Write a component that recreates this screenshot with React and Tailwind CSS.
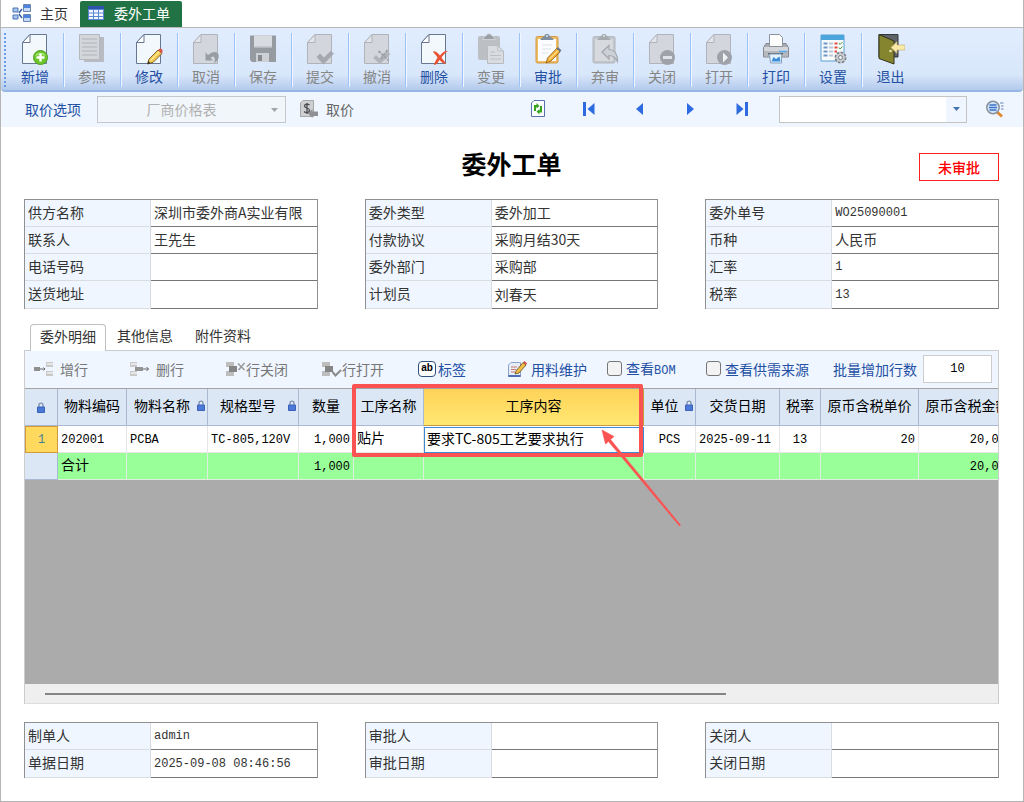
import clsx from "clsx";

const TONES = {
    on: { page: "#f3f8fd", line: "#667890", fold: "#ffffff" },
    off: { page: "#d3d7dd", line: "#b0b4ba", fold: "#e2e5ea" },
};

const Svg = ({ w = 28, h = 32, children }) => (
    <svg width={w} height={h} viewBox={`0 0 ${w} ${h}`} fill="none" aria-hidden="true" className="shrink-0">
        {children}
    </svg>
);

const Page = ({ tone = "off", children }) => (
    <Svg>
        <path d="M9 1.5H25.5V30.5H1.5V9.5Z" fill={TONES[tone].page} stroke={TONES[tone].line} />
        <path d="M9 1.5V9.5H1.5Z" fill={TONES[tone].fold} stroke={TONES[tone].line} />
        {children}
    </Svg>
);

const Clipboard = ({ tone = "off", children }) => {
    const on = tone === "on";
    return (
        <Svg>
            <rect x="2" y="3.5" width="22" height="26.5" rx="1.5" fill={on ? "#f0bd62" : "#c3c7cc"} stroke={on ? "#cf9a45" : "#b3b7bc"} />
            <rect x="4" y="6" width="18" height="22" fill={on ? "#fbfcfd" : "#d6d9de"} />
            <path d="M6.5 7C6.5 4.500 10 4.500 10.5 2.500C11 .5 15 .5 15.5 2.500C16 4.500 19.500 4.500 19.5 7Z" fill={on ? "#7f8f9f" : "#a6aaaf"} />
            <circle cx="13" cy="3" r="1" fill="#dfe5ec" />
            {children}
        </Svg>
    );
};

const Pencil = () => (
    <>
        <path d="M14 26L23 17L27 20.5L18 29.5L12.5 31Z" fill="#f2c94c" stroke="#5a4320" strokeWidth=".8" />
        <path d="M15.5 27.5L24.5 18.5" stroke="#fdeb9b" strokeWidth="1.2" />
        <path d="M23 17L25 15.5C26.5 15 28 17 27.5 19L26.5 20.5Z" fill="#d8564a" />
        <path d="M12.5 31L13.3 28L15.5 30.2Z" fill="#2e2a26" />
    </>
);

const AddIcon = () => (
    <Page tone="on">
        <circle cx="19.5" cy="24.5" r="7" fill="#6cc62b" stroke="#4d9f20" />
        <path d="M14 23C15 18.5 24 18.5 25 23C21 21.5 18 21.5 14 23Z" fill="#a7e36c" />
        <path d="M19.5 20.5V28.5M15.5 24.5H23.5" stroke="#fff" strokeWidth="2.400" />
    </Page>
);

const ReferIcon = () => (
    <Svg>
        <path d="M6 4H26V29H6Z" fill="#b8bcc2" />
        <path d="M1.5 1.5H21.5V26.5H1.5Z" fill="#d3d6db" stroke="#b5b9be" />
        <path d="M4 6H19M4 10H19M4 14H19M4 18H19M4 22H19" stroke="#b0b4b9" />
    </Svg>
);

const EditIcon = () => <Page tone="on"><Pencil /></Page>;

const CancelIcon = () => (
    <Page>
        <path d="M13.5 19.5V27.5H21L18.5 25C21 21.5 24.5 24 22 30C29.5 26 27.5 16.5 20 19.5L16 22Z" fill="#989ca3" />
    </Page>
);

const SaveIcon = () => (
    <Svg>
        <path d="M1 2.5H27V29H3L1 27Z" fill="#969aa1" />
        <path d="M5 2.5H23V15H5Z" fill="#d8dbe0" />
        <path d="M5 13.5H23V15H5Z" fill="#b5b9bf" />
        <path d="M7 20H20V29H7Z" fill="#cdd0d5" />
        <path d="M9 22H13V28H9Z" fill="#868b92" />
    </Svg>
);

const SubmitIcon = () => (
    <Page>
        <path d="M10.5 24L14 20.5L18 24.5L24.5 18L28 20.5L17.5 31.5Z" fill="#a5a9af" />
    </Page>
);

const RevokeIcon = () => (
    <Page>
        <path d="M10 25L13 22L16.5 25.5L24 19L27.5 21L17 31Z" fill="#b1b5ba" />
        <path d="M15.5 18L25.5 27.5M24.5 17L17 27" stroke="#a0a4aa" strokeWidth="2" strokeDasharray="3 1" />
    </Page>
);

const DeleteIcon = () => (
    <Page tone="on">
        <path d="M13 18.5C16 17.5 18 20.5 20 22.5C22 19.5 25 17.5 28 18C25.5 19.5 23 22 21.5 24.5C23 27 25 28.5 26 30.5C23 31.5 21 28.5 19.5 27C18 29 17 32 14 32C14.5 29 16.5 26.5 17.5 24.5C16 22 14 20.5 13 18.5Z" fill="#ea5236" />
    </Page>
);

const ChangeIcon = () => (
    <Svg>
        <rect x="1" y="3" width="22" height="24" rx="2" fill="#bcc0c5" />
        <path d="M6 6.5C7 3.500 9 3.500 9.5 2C10 .5 14 .5 14.5 2C15 3.500 17 3.500 18 6.5Z" fill="#9a9ea5" stroke="#cfd2d6" />
        <path d="M10.5 12.5H20.5L26.5 18V30.5H10.5Z" fill="#d9dce1" stroke="#b8bcc1" />
        <path d="M20.5 12.5V18H26.5M13 19H18M13 22.5H24M13 26H24" stroke="#bcc0c5" />
    </Svg>
);

const ApproveIcon = () => (
    <Clipboard tone="on">
        <path d="M8 12H18M8 16H17M8 20H14" stroke="#dfe3e8" />
        <path d="M13.5 25L22.5 15.5L26 19L17 28L12 30Z" fill="#f4ab33" stroke="#8a6425" strokeWidth=".8" />
        <path d="M15 26.5L24.5 17" stroke="#ffe08a" strokeWidth="1.2" />
        <path d="M22.5 15.5L24 14L27.5 17.5L26 19Z" fill="#6b7480" />
    </Clipboard>
);

const UnapproveIcon = () => (
    <Clipboard>
        <path d="M11 19L18 12.5V16.5C24 17 27 22 26.5 28.5C24 23.5 21.5 22.5 18 22.5V26Z" fill="#cdd1d6" stroke="#a3a7ad" strokeWidth="1.2" />
    </Clipboard>
);

const CloseDocIcon = () => (
    <Page>
        <circle cx="19.5" cy="24.5" r="7.5" fill="#9fa3a9" />
        <path d="M15 23H24V26H15Z" fill="#dfe2e6" />
    </Page>
);

const OpenDocIcon = () => (
    <Page>
        <circle cx="19.5" cy="24.5" r="7.5" fill="#9fa3a9" />
        <path d="M18 19.5L23 24.5L18 29.5Z" fill="#f0f2f4" />
    </Page>
);

const PrintIcon = () => (
    <Svg>
        <path d="M4 10.5H24L26.5 14.5V24H1.5V14.5Z" fill="#a9adb3" stroke="#85898f" />
        <path d="M7.5 1.5H17.5L20.5 4.500V13.5H7.5Z" fill="#fdfdfe" stroke="#8d939b" />
        <path d="M2 14H26V18H2Z" fill="#d3d6da" />
        <path d="M2 18H26V23.5H2Z" fill="#b5b9be" />
        <path d="M6 20H21V21.5H6Z" fill="#5b5f65" />
        <path d="M17 18.5H25" stroke="#58a7f0" strokeWidth="1.5" />
        <path d="M7.5 21H19.5V30H8.5Z" fill="#e3f2fc" stroke="#86a2bc" />
        <path d="M9.5 28.5L11.5 24L14 26L17.5 23.5L18.5 28.5Z" fill="#3b8edb" />
    </Svg>
);

const SettingIcon = () => (
    <Svg>
        <path d="M2 2H25V28H2Z" fill="#f8fbfd" stroke="#5a9fcd" />
        <path d="M2 2H25V7H2Z" fill="#4aa5db" />
        <path d="M4.5 10.5H8.5M4.5 14.5H8.5M4.5 18.5H8.5M4.5 22.5H8.5" stroke="#6c98c6" strokeWidth="2" />
        <path d="M10 10.5H14M10 14.5H14M10 18.5H14M10 22.5H14" stroke="#b9c8d6" strokeWidth="2" />
        <path d="M15.5 10.5H18.5M15.5 14.5H18.5M15.5 18.5H18" stroke="#e14b3b" strokeWidth="2.200" />
        <path d="M20 10L21 11.5L23.5 9M20 14.5L21 16L23.5 13.5" stroke="#4f9e3c" />
        <circle cx="21.5" cy="24.5" r="5.200" fill="#c9cdd2" stroke="#7a7f86" strokeWidth="1.6" strokeDasharray="2.600 1.400" />
        <circle cx="21.5" cy="24.5" r="2" fill="#eef1f4" stroke="#7a7f86" />
    </Svg>
);

const ExitIcon = () => (
    <Svg>
        <path d="M2 1.5H21V24H2Z" fill="#5e6269" stroke="#33363a" />
        <path d="M2 1.5L17 8V31L2 25.5Z" fill="#85842f" stroke="#33341a" />
        <circle cx="13.5" cy="18" r="1.300" fill="#e8e3a8" />
        <path d="M14 14.5L20 8.5V12H28V17H20V20.5Z" fill="#fbeaa6" stroke="#b9a874" strokeWidth=".6" />
    </Svg>
);

const TOOLS = [
    { label: "新增", icon: AddIcon, on: true },
    { label: "参照", icon: ReferIcon },
    { label: "修改", icon: EditIcon, on: true },
    { label: "取消", icon: CancelIcon },
    { label: "保存", icon: SaveIcon },
    { label: "提交", icon: SubmitIcon },
    { label: "撤消", icon: RevokeIcon },
    { label: "删除", icon: DeleteIcon, on: true },
    { label: "变更", icon: ChangeIcon },
    { label: "审批", icon: ApproveIcon, on: true },
    { label: "弃审", icon: UnapproveIcon },
    { label: "关闭", icon: CloseDocIcon },
    { label: "打开", icon: OpenDocIcon },
    { label: "打印", icon: PrintIcon, on: true },
    { label: "设置", icon: SettingIcon, on: true },
    { label: "退出", icon: ExitIcon, on: true },
];

const HomeIcon = () => (
    <Svg w={20} h={20}>
        <path d="M1 5H6V9H1ZM1 12H6V16H1Z" fill="#a9c4ee" stroke="#4d74b8" />
        <path d="M11.5 1.5H18.5V8.5H11.5ZM11.5 11.5H18.5V18.5H11.5Z" fill="#c7d9f4" stroke="#6c86b4" />
        <path d="M12 2H18V5H12ZM12 12H18V15H12Z" fill="#4b83dd" />
        <path d="M7 10L10 6M7 11L10 15" stroke="#35609f" strokeWidth="1.5" />
    </Svg>
);

const SheetIcon = () => (
    <Svg w={16} h={14}>
        <path d="M0 0H16V14H0Z" fill="#5b86d6" />
        <path d="M0 0H16V3H0Z" fill="#2d55ad" />
        <path d="M1 4H5V6.5H1ZM6 4H10V6.5H6ZM11 4H15V6.5H11ZM1 7.5H5V10H1ZM6 7.5H10V10H6ZM11 7.5H15V10H11ZM1 11H5V13H1ZM6 11H10V13H6ZM11 11H15V13H11Z" fill="#f3f7fe" />
    </Svg>
);

const PriceIcon = () => (
    <Svg w={19} h={18}>
        <path d="M3 .5H13.5V16.5H.5V3Z" fill="#cfd0d2" stroke="#a5a7a9" />
        <path d="M9.5 5C8 3.500 4.500 3.800 4.5 6C4.5 8.500 9.5 7.500 9.5 10.5C9.5 13 5.5 13 4 11.5M7 3V14" stroke="#4b4d50" strokeWidth="1.300" />
        <path d="M8 13.5L12.5 9V11.5H18V16H12.5V18Z" fill="#8f9194" />
    </Svg>
);

const RefreshIcon = () => (
    <Svg w={14} h={18}>
        <path d="M3 .5H13.5V16.5H.5V3Z" fill="#fff" stroke="#5a70ae" />
        <path d="M4 11V6H6M10 6V11.5H8" stroke="#37a31d" strokeWidth="2" />
        <path d="M5.500 3L8.5 6L5.500 8.500ZM8.500 9L5.500 11.5L8.500 14.500Z" fill="#37a31d" />
    </Svg>
);

const FirstIcon = () => (
    <Svg w={14} h={14}>
        <path d="M1 0H4V14H1Z" fill="#2f6be0" />
        <path d="M12.5 1V13L5.5 7Z" fill="#2f6be0" />
    </Svg>
);
const PrevIcon = () => <Svg w={9} h={14}><path d="M8 1V13L1 7Z" fill="#2f6be0" /></Svg>;
const NextIcon = () => <Svg w={9} h={14}><path d="M1 1V13L8 7Z" fill="#2f6be0" /></Svg>;
const LastIcon = () => (
    <Svg w={14} h={14}>
        <path d="M10 0H13V14H10Z" fill="#2f6be0" />
        <path d="M1.5 1V13L8.5 7Z" fill="#2f6be0" />
    </Svg>
);

const SearchIcon = () => (
    <Svg w={20} h={18}>
        <path d="M11.5 11.5L17 16.5" stroke="#e18a2d" strokeWidth="3" />
        <circle cx="8" cy="7.5" r="6.200" fill="#cfe4fb" stroke="#8a9099" strokeWidth="1.5" />
        <path d="M4.5 5H11.5M4 7.5H12M4.5 10H11.5" stroke="#3e73c6" strokeWidth="1.300" />
        <path d="M15 3H18.5M16 6H18.5M16 9H18.5" stroke="#6484b4" />
    </Svg>
);

const Caret = ({ className }) => (
    <svg width="7" height="4" viewBox="0 0 7 4" className={className} aria-hidden="true">
        <path d="M0 0H7L3.500 4Z" fill="currentColor" />
    </svg>
);

const RowIcon = ({ children }) => <Svg w={20} h={16}>{children}</Svg>;

const InsertRowIcon = () => (
    <RowIcon>
        <path d="M0 6H6V10H0Z" fill="#8f8f8f" />
        <path d="M6 8H11M9.5 6.500L11 8L9.5 9.500" stroke="#666" />
        <path d="M12 1H19V6H12ZM12 10H19V15H12Z" fill="#c9c9c9" />
        <path d="M13 2H19V4H13ZM13 11H19V13H13Z" fill="#e6e6e6" />
    </RowIcon>
);
const RemoveRowIcon = () => (
    <RowIcon>
        <path d="M0 1H7V6H0ZM0 10H7V15H0Z" fill="#c9c9c9" />
        <path d="M1 2H7V4H1ZM1 11H7V13H1Z" fill="#e6e6e6" />
        <path d="M5 6H13V10H5Z" fill="#939393" />
        <path d="M13 8H18.5M16.5 6L18.5 8L16.5 10" stroke="#666" />
    </RowIcon>
);
const CloseRowIcon = () => (
    <RowIcon>
        <path d="M0 1H8V6H0ZM0 10H8V15H0Z" fill="#bdbdbd" />
        <path d="M3 5H11V11H3Z" fill="#858585" />
        <path d="M12 2.5L18.5 9M18.5 2L12.5 9" stroke="#999" strokeWidth="1.5" />
    </RowIcon>
);
const OpenRowIcon = () => (
    <RowIcon>
        <path d="M0 1H8V6H0ZM0 10H8V15H0Z" fill="#bdbdbd" />
        <path d="M3 5H11V11H3Z" fill="#858585" />
        <path d="M10.5 11L13.5 14.5L19 9" stroke="#8a8a8a" strokeWidth="2" />
    </RowIcon>
);
const MaterialIcon = () => (
    <Svg w={20} h={18}>
        <path d="M3 2.5H12.5V16.5H.5V5Z" fill="#e4edf9" stroke="#8fa3c8" />
        <path d="M3 7H9M3 9.5H8M3 12H7" stroke="#d07a6a" />
        <path d="M.5 15H12.5V17H.5Z" fill="#4d6fb5" />
        <path d="M8 11L15 2.5L18 5L11 13L7 14Z" fill="#f0be45" stroke="#5f4a22" strokeWidth=".8" />
        <path d="M15 2.5L16.5 1L19 3.5L18 5Z" fill="#cf5047" />
    </Svg>
);

const LockIcon = () => (
    <svg width="8" height="11" viewBox="0 0 8 11" fill="none" className="shrink-0" aria-hidden="true">
        <path d="M2 5.5V3C2 .5 6 .5 6 3V5.5" stroke="#7d8fb0" strokeWidth="1.300" />
        <path d="M.5 5H7.5V10.5H.5Z" fill="#4a79d8" stroke="#3a63b8" />
    </svg>
);

const Num = ({ children }) => <span className="font-['Liberation_Mono',monospace] text-xs">{children}</span>;

const HEADER_FORMS = [
    [
        { id: "supplier", label: "供方名称", value: "深圳市委外商A实业有限" },
        { id: "contact", label: "联系人", value: "王先生" },
        { id: "phone", label: "电话号码", value: "" },
        { id: "address", label: "送货地址", value: "" },
    ],
    [
        { id: "type", label: "委外类型", value: "委外加工" },
        { id: "payment", label: "付款协议", value: "采购月结30天" },
        { id: "dept", label: "委外部门", value: "采购部" },
        { id: "planner", label: "计划员", value: "刘春天" },
    ],
    [
        { id: "orderNo", label: "委外单号", value: "WO25090001", num: true },
        { id: "currency", label: "币种", value: "人民币" },
        { id: "rate", label: "汇率", value: "1", num: true },
        { id: "tax", label: "税率", value: "13", num: true },
    ],
];

const FOOTER_FORMS = [
    [
        { id: "creator", label: "制单人", value: "admin", num: true },
        { id: "createdAt", label: "单据日期", value: "2025-09-08 08:46:56", num: true },
    ],
    [
        { id: "approver", label: "审批人", value: "" },
        { id: "approvedAt", label: "审批日期", value: "" },
    ],
    [
        { id: "closer", label: "关闭人", value: "" },
        { id: "closedAt", label: "关闭日期", value: "" },
    ],
];

const FieldGroup = ({ fields }) => (
    <div className="border-t border-r border-l border-[#909090]">
        {fields.map((f) => (
            <div key={f.id} className="flex h-[27px] last:h-7">
                <label htmlFor={f.id} className="w-[126px] shrink-0 border-r border-b border-[#d9dde2] bg-[#eff6ff] pl-[3px] leading-6">
                    {f.label}
                </label>
                <input
                    id={f.id}
                    defaultValue={f.value}
                    className={clsx(
                        "min-w-0 flex-1 border-b border-[#777777] bg-white pl-[3px] outline-none",
                        f.num ? "font-['Liberation_Mono',monospace] text-xs" : "pb-[2px]"
                    )}
                />
            </div>
        ))}
    </div>
);

const FormRow = ({ groups }) => (
    <div className="grid grid-cols-3 gap-[47px]">
        {groups.map((fields) => (
            <FieldGroup key={fields[0].id} fields={fields} />
        ))}
    </div>
);

const ActionButton = ({ icon: Icon, label, className }) => (
    <button type="button" className={clsx("flex shrink-0 items-center text-left", className)}>
        <Icon />
        {label}
    </button>
);

const COLUMNS = [
    { title: "物料编码", width: "w-[69px]", value: <Num>202001</Num>, total: "合计" },
    { title: "物料名称", width: "w-[81px]", lock: true, value: <Num>PCBA</Num> },
    { title: "规格型号", width: "w-[91px]", lock: true, value: <Num>TC-805,120V</Num> },
    { title: "数量", width: "w-[55px]", align: "text-right", value: <Num>1,000</Num>, total: <Num>1,000</Num> },
    { title: "工序名称", width: "w-[70px]", value: "贴片" },
    { title: "工序内容", width: "w-[220px]", value: "要求TC-805工艺要求执行", active: true },
    { title: "单位", width: "w-[52px]", lock: true, align: "text-center", value: <Num>PCS</Num> },
    { title: "交货日期", width: "w-[84px]", value: <Num>2025-09-11</Num> },
    { title: "税率", width: "w-[41px]", align: "text-center", value: <Num>13</Num> },
    { title: "原币含税单价", width: "w-[98px]", align: "text-right", value: <Num>20</Num> },
    { title: "原币含税金额", width: "w-[98px]", align: "text-right", value: <Num>20,000</Num>, total: <Num>20,000</Num> },
];

const DetailGrid = () => (
    <div className="relative flex flex-1 flex-col">
        <div className="flex-1 overflow-hidden border-t border-[#a3a3a3] bg-[#ababab]">
            <table className="w-[992px] table-fixed border-separate border-spacing-0 text-black">
                <thead>
                    <tr className="h-[37px]">
                        <th className="w-[33px] border-r border-b border-[#a9b9d3] bg-[#dbe7f5]">
                            <div className="flex justify-center"><LockIcon /></div>
                        </th>
                        {COLUMNS.map((c) => (
                            <th
                                key={c.title}
                                className={clsx(
                                    "border-r border-b px-0 pt-0 pb-1 font-normal whitespace-nowrap",
                                    c.width,
                                    c.active ? "border-[#c99a3c] bg-linear-to-b from-[#ffd257] to-[#ffe873]" : "border-[#a9b9d3] bg-[#dbe7f5]"
                                )}
                            >
                                <div className="flex items-center">
                                    <span className="flex-1">{c.title}</span>
                                    {c.lock && <span className="pr-[2px]"><LockIcon /></span>}
                                </div>
                            </th>
                        ))}
                    </tr>
                </thead>
                <tbody>
                    <tr className="h-[27px]">
                        <td className="border border-[#d29a3a] bg-[#ffd95e] px-0 pt-0 pb-1 text-center text-[#3f7f96]"><Num>1</Num></td>
                        {COLUMNS.map((c) =>
                            c.active ? (
                                <td key={c.title} className="bg-white p-0">
                                    <input
                                        aria-label={c.title}
                                        defaultValue={c.value}
                                        className="block h-[26px] w-full border border-[#3c8ad6] pb-1 pl-[2px] outline-none"
                                    />
                                </td>
                            ) : (
                                <td key={c.title} className={clsx("border-r border-b border-[#e6e6e6] bg-white px-[3px] pt-0 pb-1 whitespace-nowrap", c.align)}>
                                    {c.value}
                                </td>
                            )
                        )}
                    </tr>
                    <tr className="h-[27px]">
                        <td className="border-r border-b border-[#a9b9d3] bg-[#dbe7f5] p-0" />
                        {COLUMNS.map((c) => (
                            <td key={c.title} className={clsx("border-r border-b border-[#dfeedd] bg-[#99ff99] px-[3px] pt-0 pb-1 whitespace-nowrap", c.align)}>
                                {c.total}
                            </td>
                        ))}
                    </tr>
                </tbody>
            </table>
        </div>
        <div className="flex h-5 items-center border-b border-[#dddddd] bg-[#efefef] px-5">
            <div className="h-[2px] w-[73%] bg-[#858585]" />
        </div>

        {/* highlight frame round the process columns, with its pointer */}
        <div className="pointer-events-none absolute -top-1 left-[327px] h-[73px] w-[291px] rounded-xs border-4 border-[#fb5252]" />
        <svg width="84" height="100" viewBox="0 0 84 100" className="pointer-events-none absolute top-[41px] left-[575px]" aria-hidden="true">
            <path d="M2 1L14 7.5L10.500 10.5L80.500 96L79.500 97L8.500 12.500L5.500 15Z" fill="#fb5252" stroke="#fb5252" strokeWidth=".6" />
        </svg>
    </div>
);

const TABS = ["委外明细", "其他信息", "附件资料"];

const PAGERS = [
    { name: "刷新", icon: RefreshIcon },
    { name: "首张", icon: FirstIcon },
    { name: "上一张", icon: PrevIcon },
    { name: "下一张", icon: NextIcon },
    { name: "末张", icon: LastIcon },
];

const CHECK = "h-[15px] w-[15px] shrink-0 appearance-none rounded-[3px] border border-[#767676] bg-[#f3f3f3]";

export default function App() {
    return (
        <div className="flex min-h-screen flex-col border-x border-b border-[#b5b5b5] bg-white font-['Noto_Sans_CJK_SC',sans-serif] text-sm text-[#333333]">
            <nav className="flex h-7 items-end border-b border-[#b8b8b8]">
                <a href="#home" className="flex h-[26px] items-center gap-2 pr-3 pb-[2px] pl-[11px]">
                    <HomeIcon />
                    主页
                </a>
                <a href="#order" className="flex h-[26px] items-center gap-[10px] rounded-t-xs bg-[#217346] pr-3 pb-[2px] pl-2 text-white">
                    <SheetIcon />
                    委外工单
                </a>
            </nav>

            <div className="flex h-16 items-start rounded-b border-b-2 border-[#96b6e6] bg-linear-to-b from-[#e1edff] from-0% via-[#d9e7fb] via-75% to-[#b3caec] pt-[5px] pl-[3px]">
                <div className="mr-px h-[54px] border-l-2 border-dotted border-[#6c9be0]" />
                {TOOLS.map(({ label, icon: Icon, on }) => (
                    <button
                        key={label}
                        type="button"
                        disabled={!on}
                        className={clsx(
                            "flex h-[54px] w-[57px] flex-col items-center border-r border-[#9cc3f8] shadow-[1px_0_0_#eff6ff] last:border-r-0 last:shadow-none",
                            on ? "text-[#2450a4]" : "text-[#858585]"
                        )}
                    >
                        <Icon />
                        <span className="leading-[22px]">{label}</span>
                    </button>
                ))}
            </div>

            <div className="flex h-[35px] items-center bg-[#eff6ff] pr-[18px] pb-px pl-6">
                <label htmlFor="priceOption" className="text-[#2450a4]">取价选项</label>
                <div className="relative ml-4 w-[189px]">
                    <select id="priceOption" disabled className="h-[27px] w-full appearance-none border border-[#c4c8cd] bg-[#f1f6fb] pr-5 [text-align-last:center] text-[#b0b0b0] opacity-100">
                        <option>厂商价格表</option>
                    </select>
                    <Caret className="pointer-events-none absolute top-3 right-2 text-[#a5a5a5]" />
                </div>
                <button type="button" className="ml-[14px] flex items-center gap-[7px] text-[#666666]">
                    <PriceIcon />
                    取价
                </button>
                <div className="ml-auto flex">
                    {PAGERS.map(({ name, icon: Icon }) => (
                        <button key={name} type="button" aria-label={name} className="flex w-[51px] items-center justify-center">
                            <Icon />
                        </button>
                    ))}
                </div>
                <div className="relative ml-3 w-[188px]">
                    <select aria-label="查询" className="h-[27px] w-full appearance-none border border-[#c4c4c4] bg-white">
                        <option></option>
                    </select>
                    <span className="pointer-events-none absolute inset-y-px right-px flex w-5 items-center justify-center bg-[#eff6ff] text-[#4475b0]">
                        <Caret />
                    </span>
                </div>
                <button type="button" aria-label="搜索" className="ml-[18px]"><SearchIcon /></button>
            </div>

            <main className="flex flex-1 flex-col pr-[24px] pb-[23px] pl-[23px]">
                <header className="grid h-[72px] grid-cols-[1fr_auto_1fr] items-center">
                    <h1 className="col-start-2 text-[25px] leading-8 font-bold text-black">委外工单</h1>
                    <span className="mt-2 flex h-7 w-20 items-center justify-center justify-self-end border border-[#ff2020] pb-px font-medium text-[#ff0000]">
                        未审批
                    </span>
                </header>

                <FormRow groups={HEADER_FORMS} />

                <div className="mt-[15px] flex h-[26px] pl-[6px]">
                    {TABS.map((t, i) => (
                        <button
                            key={t}
                            type="button"
                            className={clsx(
                                "pb-1",
                                i === 0
                                    ? "relative z-10 -mb-px rounded-t-sm border border-b-0 border-[#c0c0c0] bg-white px-[9px]"
                                    : "px-[11px]"
                            )}
                        >
                            {t}
                        </button>
                    ))}
                </div>

                <section className="flex flex-1 flex-col border-t border-r border-l border-[#cccccc]">
                    <div className="flex h-[37px] items-center bg-[#eff6ff] pb-[2px] pl-[9px] text-[#2450a4]">
                        <ActionButton icon={InsertRowIcon} label="增行" className="w-24 gap-[6px] text-[#777777]" />
                        <ActionButton icon={RemoveRowIcon} label="删行" className="w-24 gap-[6px] text-[#777777]" />
                        <ActionButton icon={CloseRowIcon} label="行关闭" className="w-24 text-[#777777]" />
                        <ActionButton icon={OpenRowIcon} label="行打开" className="w-24 text-[#777777]" />
                        <button type="button" className="flex w-[90px] shrink-0 items-center gap-[2px]">
                            <span className="flex h-4 w-[18px] items-center justify-center rounded-sm border border-[#2f4f7d] bg-white font-['Liberation_Sans',sans-serif] text-[10px] font-bold text-black">ab</span>
                            标签
                        </button>
                        <ActionButton icon={MaterialIcon} label="用料维护" className="w-[99px] gap-[3px]" />
                        <label className="flex w-[99px] shrink-0 items-center gap-1">
                            <input type="checkbox" className={CHECK} />
                            <span>查看<Num>BOM</Num></span>
                        </label>
                        <label className="flex w-[127px] shrink-0 items-center gap-1">
                            <input type="checkbox" className={CHECK} />
                            查看供需来源
                        </label>
                        <label htmlFor="batchRows" className="shrink-0">批量增加行数</label>
                        <input id="batchRows" defaultValue="10" className="ml-[6px] h-7 w-[69px] border border-[#cccccc] bg-white text-center font-['Liberation_Mono',monospace] text-xs text-black" />
                    </div>
                    <DetailGrid />
                </section>

                <div className="mt-[18px]">
                    <FormRow groups={FOOTER_FORMS} />
                </div>
            </main>
        </div>
    );
}
